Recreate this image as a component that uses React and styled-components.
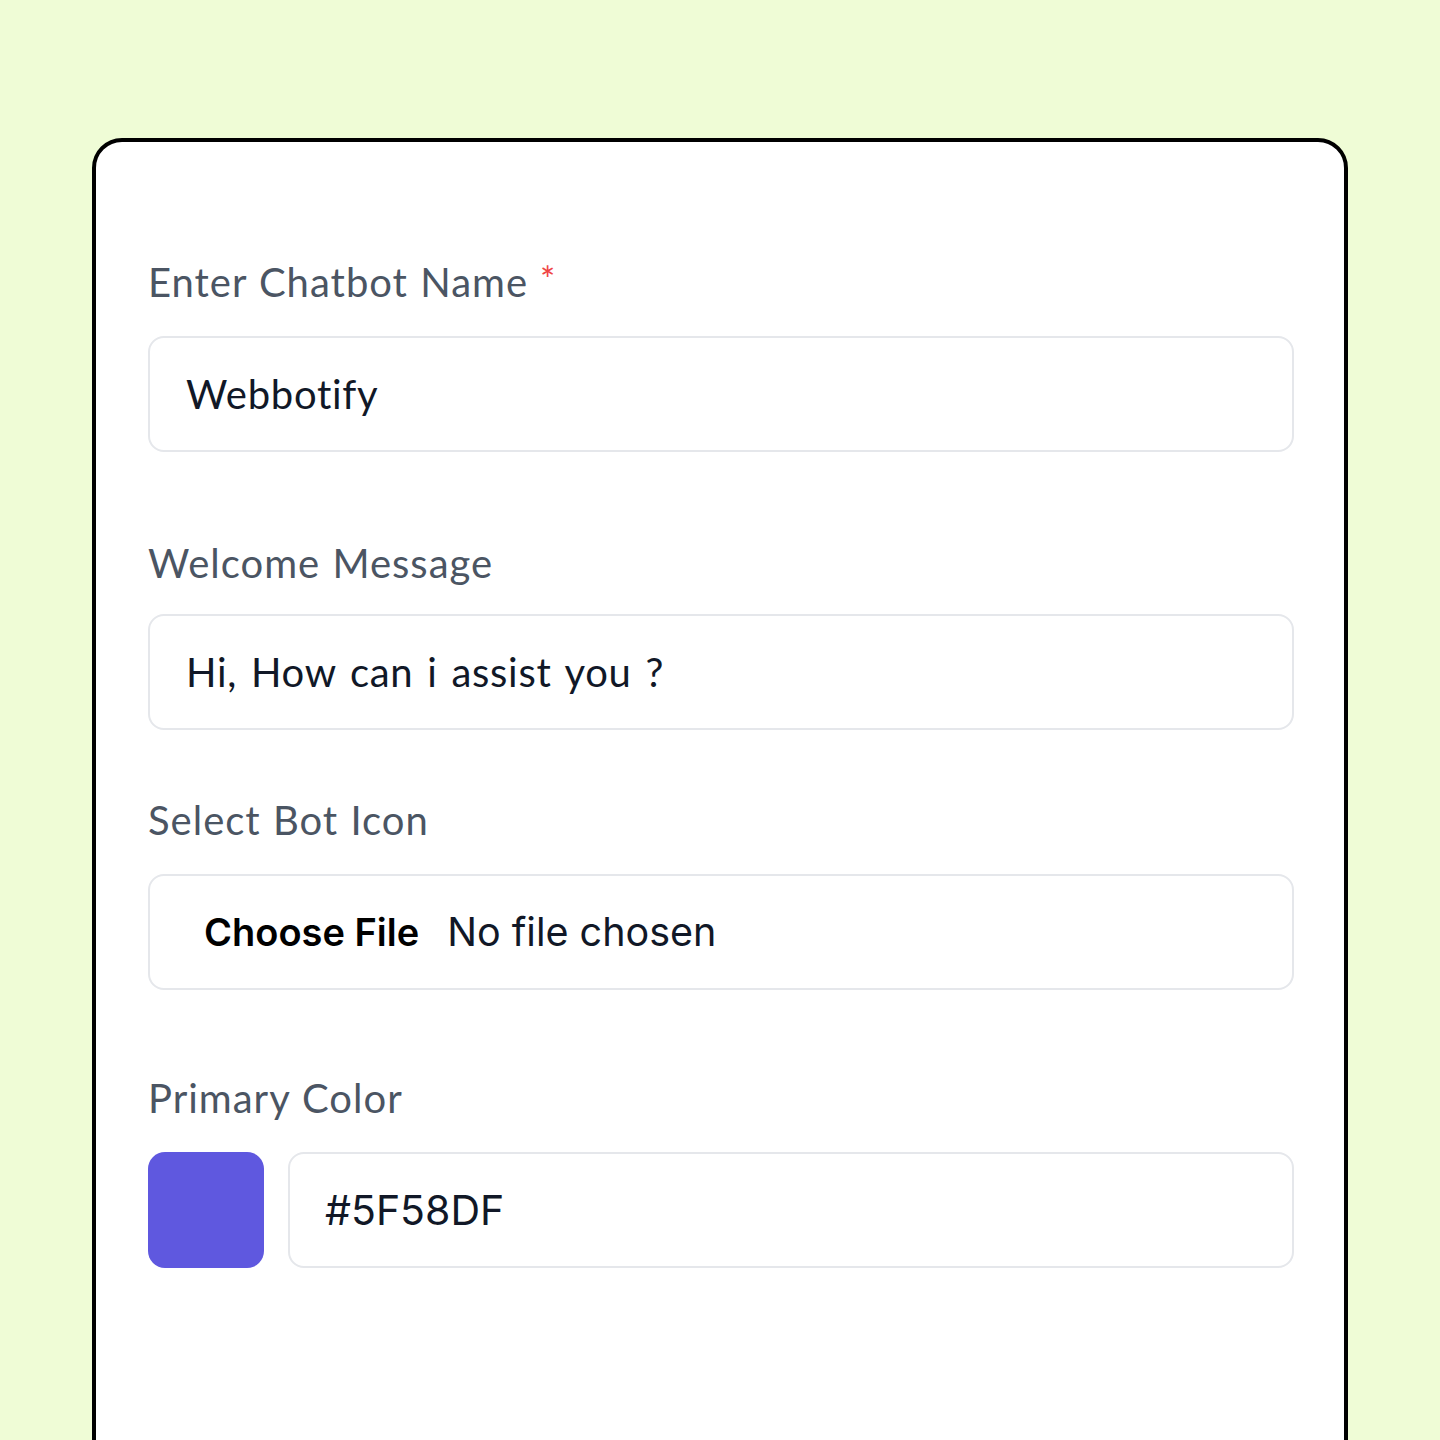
import React from "react";
import styled, { createGlobalStyle } from "styled-components";

const Global = createGlobalStyle`
  html, body {
    margin: 0;
    padding: 0;
    height: 1440px;
    overflow: hidden;
    background: #effcd6;
  }
  * { box-sizing: border-box; }
`;

const Page = styled.div`
  padding: 138px 92px 0 92px;
  font-family: "Lato", "Noto Sans", sans-serif;
`;

const Card = styled.div`
  width: 1256px;
  min-height: 1400px;
  background: #ffffff;
  border: 4px solid #000000;
  border-radius: 30px;
  padding: 117px 50px 0 52px;
  display: flex;
  flex-direction: column;
`;

const Field = styled.div`
  display: flex;
  flex-direction: column;
  margin-top: ${(p) => p.$top || 0}px;
`;

const Label = styled.div`
  font-size: 40px;
  line-height: 40px;
  color: #4b5563;
  margin-bottom: ${(p) => p.$gap ?? 34}px;
  letter-spacing: 1px;
  word-spacing: 1px;
`;

const Required = styled.span`
  color: #ef4444;
  margin-left: 12px;
  font-size: 36px;
  vertical-align: 4px;
`;

const Box = styled.div`
  height: 116px;
  border: 2px solid #e5e7eb;
  border-radius: 16px;
  display: flex;
  align-items: center;
  padding-left: ${(p) => p.$pad || 36}px;
  font-size: 40px;
  color: #111827;
  letter-spacing: 0.7px;
  word-spacing: 3px;
`;

const HexBox = styled(Box)`
  flex: 1;
  font-family: "Inter", "Liberation Sans", sans-serif;
  font-size: 41px;
  letter-spacing: 0;
  word-spacing: 0;
`;

const ChooseButton = styled.span`
  font-family: "Inter", "Liberation Sans", sans-serif;
  font-weight: 600;
  color: #000;
  font-size: 38px;
  letter-spacing: 0;
  word-spacing: 0;
  margin-right: 28px;
`;

const NoFile = styled.span`
  font-family: "Inter", "Liberation Sans", sans-serif;
  font-size: 39.5px;
  letter-spacing: 0;
  word-spacing: 0;
  color: #111827;
`;

const ColorRow = styled.div`
  display: flex;
  gap: 24px;
`;

const Swatch = styled.div`
  width: 116px;
  height: 116px;
  border-radius: 17px;
  background: ${(p) => p.$color};
  flex: none;
`;

export default function App() {
  return (
    <>
      <Global />
      <Page>
        <Card>
          <Field>
            <Label>
              Enter Chatbot Name<Required>*</Required>
            </Label>
            <Box>Webbotify</Box>
          </Field>
          <Field $top={91}>
            <Label $gap={31}>Welcome Message</Label>
            <Box>Hi, How can i assist you ?</Box>
          </Field>
          <Field $top={70}>
            <Label>Select Bot Icon</Label>
            <Box $pad={54}>
              <ChooseButton>Choose File</ChooseButton>
              <NoFile>No file chosen</NoFile>
            </Box>
          </Field>
          <Field $top={88}>
            <Label>Primary Color</Label>
            <ColorRow>
              <Swatch $color="#5F58DF" />
              <HexBox $pad={35}>#5F58DF</HexBox>
            </ColorRow>
          </Field>
        </Card>
      </Page>
    </>
  );
}
